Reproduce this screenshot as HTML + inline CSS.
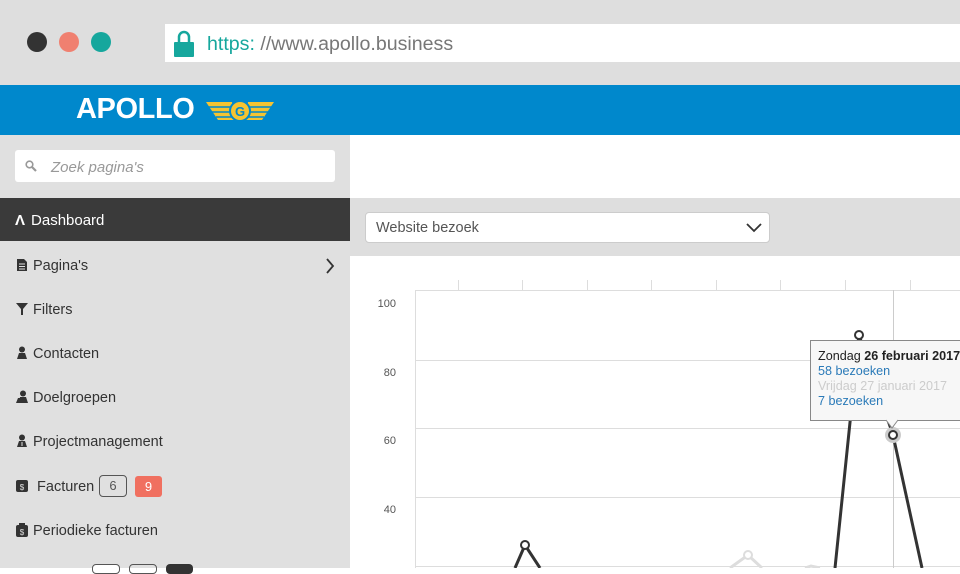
<!DOCTYPE html>
<html><head><meta charset="utf-8"><style>
*{margin:0;padding:0;box-sizing:border-box}
body{width:960px;height:568px;overflow:hidden;position:relative;background:#fff;font-family:"Liberation Sans",sans-serif}
.abs{position:absolute}
.nav{font-size:14.5px;color:#333;left:16px}
.nav svg{vertical-align:-2px;margin-right:5px}
</style></head><body>
<div class="abs" style="left:0;top:0;width:960px;height:85px;background:#dedede"></div>
<div class="abs" style="left:27px;top:32px;width:20px;height:20px;border-radius:50%;background:#333"></div>
<div class="abs" style="left:59px;top:32px;width:20px;height:20px;border-radius:50%;background:#f08070"></div>
<div class="abs" style="left:91px;top:32px;width:20px;height:20px;border-radius:50%;background:#16a79d"></div>
<div class="abs" style="left:165px;top:24px;width:795px;height:38px;background:#fff"></div>
<svg class="abs" style="left:173px;top:30px" width="22" height="28"><path d="M6 12V7a5 5 0 0 1 10 0v5" stroke="#16a79d" stroke-width="2.5" fill="none"/><rect x="1" y="12" width="20" height="15" rx="1" fill="#16a79d"/></svg>
<div class="abs" style="left:207px;top:33px;font-size:19.6px;color:#777"><span style="color:#16a79d">https:</span> //www.apollo.business</div>
<div class="abs" style="left:0;top:85px;width:960px;height:50px;background:#0088cc"></div>
<div class="abs" style="left:76px;top:93px;font-size:29px;font-weight:bold;color:#fff;letter-spacing:-0.4px">APOLLO</div>
<svg class="abs" style="left:204px;top:98px" width="72" height="26"><path d="M2 4H28L30 22H14Z M70 4H44L42 22H58Z" fill="#f5c431"/><path d="M4 9H28M8 14H28M12 19H28M68 9H44M64 14H44M60 19H44" stroke="#0088cc" stroke-width="1.5"/><circle cx="36" cy="13" r="10" fill="#f5c431" stroke="#0088cc" stroke-width="2"/><text x="36" y="18" font-size="13" font-weight="bold" fill="#0088cc" text-anchor="middle" font-family="Liberation Sans">G</text></svg>
<div class="abs" style="left:0;top:135px;width:350px;height:433px;background:#e0e0e0"></div>
<div class="abs" style="left:15px;top:150px;width:320px;height:32px;background:#fff;border-radius:3px"></div>
<svg class="abs" style="left:25px;top:160px" width="12" height="12"><circle cx="4.5" cy="4.5" r="3.3" stroke="#999" stroke-width="1.6" fill="none"/><path d="M7 7L11 11" stroke="#999" stroke-width="2.2"/></svg>
<div class="abs" style="left:51px;top:159px;font-size:15px;font-style:italic;color:#999">Zoek pagina's</div>
<div class="abs" style="left:0;top:198px;width:350px;height:43px;background:#3a3a3a"></div>
<div class="abs" style="left:15px;top:212px;font-size:15px;color:#fff"><b style="margin-right:6px">Λ</b>Dashboard</div>
<div class="abs nav" style="top:258px"><svg width="12" height="14"><path d="M1 1H8L11 4V13H1Z" fill="#333"/><path d="M3 6H9M3 8.5H9M3 11H9" stroke="#e0e0e0"/></svg>Pagina's</div>
<svg class="abs" style="left:325px;top:258px" width="10" height="16"><path d="M2 1L8 8L2 15" stroke="#333" stroke-width="1.8" fill="none"/></svg>
<div class="abs nav" style="top:302px"><svg width="12" height="14"><path d="M0 1H12L7 7V13H5V7Z" fill="#333"/></svg>Filters</div>
<div class="abs nav" style="top:346px"><svg width="12" height="14"><circle cx="6" cy="3.5" r="3" fill="#333"/><path d="M1 13L3 7H9L11 13Z" fill="#333"/></svg>Contacten</div>
<div class="abs nav" style="top:390px"><svg width="12" height="14"><circle cx="7" cy="3.5" r="3" fill="#333"/><path d="M3 13L4 7H10L12 13Z M0 13L2 8H4L3 13Z" fill="#333"/></svg>Doelgroepen</div>
<div class="abs nav" style="top:434px"><svg width="12" height="14"><circle cx="6" cy="3.5" r="3" fill="#333"/><path d="M1 13L3 7H9L11 13Z" fill="#333"/><path d="M6 8V12" stroke="#e0e0e0"/></svg>Projectmanagement</div>
<div class="abs nav" style="top:479px"><svg width="12" height="14"><rect x="0" y="1" width="12" height="12" rx="2" fill="#333"/><text x="6" y="11" font-size="8" fill="#e0e0e0" text-anchor="middle">$</text></svg> Facturen</div>
<div class="abs" style="left:99px;top:475px;width:28px;height:22px;border:1px solid #555;border-radius:4px;font-size:13px;color:#555;text-align:center;line-height:20px">6</div>
<div class="abs" style="left:135px;top:476px;width:27px;height:21px;background:#f07060;border-radius:3px;font-size:13px;color:#fff;text-align:center;line-height:21px">9</div>
<div class="abs nav" style="top:523px"><svg width="12" height="14"><rect x="0" y="2" width="12" height="12" rx="2" fill="#333"/><rect x="3" y="0" width="6" height="3" fill="#333"/><text x="6" y="12" font-size="8" fill="#e0e0e0" text-anchor="middle">$</text></svg>Periodieke facturen</div>
<div class="abs" style="left:92px;top:564px;width:28px;height:10px;background:#fff;border:1px solid #555;border-radius:4px"></div>
<div class="abs" style="left:129px;top:564px;width:28px;height:10px;border:1px solid #555;border-radius:4px"></div>
<div class="abs" style="left:166px;top:564px;width:27px;height:10px;background:#333;border-radius:4px"></div>
<div class="abs" style="left:350px;top:198px;width:610px;height:58px;background:#dedede"></div>
<div class="abs" style="left:365px;top:212px;width:405px;height:31px;background:#fff;border:1px solid #ccc;border-radius:4px"></div>
<div class="abs" style="left:376px;top:220px;font-size:14.5px;color:#555">Website bezoek</div>
<svg class="abs" style="left:746px;top:223px" width="16" height="10"><path d="M1 1L8 8L15 1" stroke="#333" stroke-width="1.8" fill="none"/></svg>
<svg class="abs" style="left:350px;top:256px" width="610" height="312">
<g stroke="#ddd" stroke-width="1">
<path d="M65 34.5H610M65 104.5H610M65 172.5H610M65 241.5H610M65 310.5H610M65.5 34V312"/>
<path d="M108.5 24V34M172.5 24V34M237.5 24V34M301.5 24V34M366.5 24V34M430.5 24V34M495.5 24V34M560.5 24V34"/>
<path d="M543.5 34V312" stroke="#ccc"/>
</g>
<g font-size="11" fill="#555" text-anchor="end" font-family="Liberation Sans"><text x="46" y="51">100</text><text x="46" y="120">80</text><text x="46" y="188">60</text><text x="46" y="257">40</text></g>
<path d="M380 312L398 299L412 312M455 312L461 310L470 312" stroke="#ddd" stroke-width="3" fill="none"/>
<circle cx="398" cy="299" r="4" fill="#fff" stroke="#ddd" stroke-width="2"/>
<path d="M165 312L175 289L190 312M485 312L509 79L543 179L572 312" stroke="#333" stroke-width="3" fill="none"/>
<circle cx="175" cy="289" r="4" fill="#fff" stroke="#333" stroke-width="2"/>
<circle cx="509" cy="79" r="4" fill="#fff" stroke="#333" stroke-width="2"/>
<circle cx="543" cy="179" r="8" fill="#ccc"/>
<circle cx="543" cy="179" r="4" fill="#fff" stroke="#333" stroke-width="2"/>
<rect x="460.5" y="84.5" width="160" height="80" fill="#f7f7f7" stroke="#888"/>
<path d="M536 164L542 172L548 164" fill="#f7f7f7" stroke="#888"/>
<g font-size="12.6" font-family="Liberation Sans"><text x="468" y="104" fill="#222">Zondag <tspan font-weight="bold">26 februari 2017</tspan></text>
<text x="468" y="119" fill="#2a7ab8">58 bezoeken</text>
<text x="468" y="134" fill="#ccc">Vrijdag 27 januari 2017</text>
<text x="468" y="149" fill="#2a7ab8">7 bezoeken</text></g>
</svg>
</body></html>
